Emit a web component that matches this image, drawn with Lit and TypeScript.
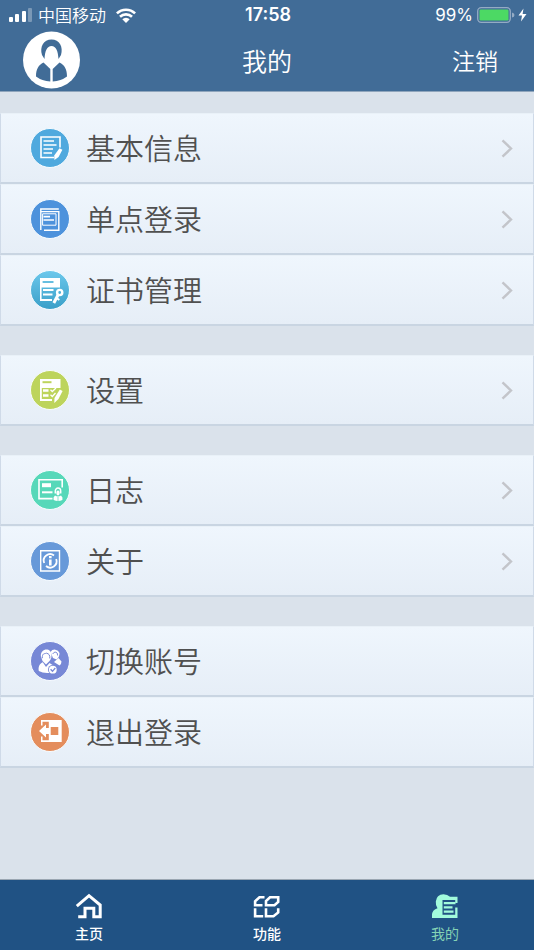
import { LitElement, html, css, svg, nothing } from "lit";
import { customElement, property } from "lit/decorators.js";

interface Item {
  id: string;
  label: string;
  chevron: boolean;
}

const groups: Item[][] = [
  [
    { id: "info", label: "基本信息", chevron: true },
    { id: "sso", label: "单点登录", chevron: true },
    { id: "cert", label: "证书管理", chevron: true },
  ],
  [{ id: "settings", label: "设置", chevron: true }],
  [
    { id: "log", label: "日志", chevron: true },
    { id: "about", label: "关于", chevron: true },
  ],
  [
    { id: "switch", label: "切换账号", chevron: false },
    { id: "logout", label: "退出登录", chevron: false },
  ],
];

const colors: Record<string, string> = {
  info: "#4fa9de",
  sso: "#4d92dc",
  cert: "url(#cert-fill)",
  settings: "#bdd45c",
  log: "#57d8b9",
  about: "#6799d9",
  switch: "#7788d6",
  logout: "#e48d5c",
};

const glyphs: Record<string, unknown> = {
  info: svg`
    <path d="M24 29.5H11V9H30V19.5" fill="none" stroke="#fff" stroke-width="1.6"/>
    <path d="M13.5 13H24M13.5 17H26.5M13.5 21H23M13.5 25H22" stroke="#fff" stroke-width="1.6"/>
    <path d="M29.5 20.2L32.4 21.8L28.6 29L24.4 32L24.2 27.6Z" fill="#fff"/>`,
  sso: svg`
    <path d="M10.8 31V10H28.8" fill="none" stroke="#fff" stroke-width="1.4"/>
    <path d="M10.8 12.6H28.8V31.2H14" fill="none" stroke="#fff" stroke-width="1.4"/>
    <path d="M12.6 14.8H26V26.2H12.6Z" fill="none" stroke="#fff" stroke-width="1"/>
    <path d="M13.5 17.6H20M13.5 21H24" stroke="#fff" stroke-width="1.6"/>`,
  cert: svg`
    <path d="M10 8H30V17.5H11.6V29H22V31H10Z" fill="#fff"/>
    <path d="M12.6 12H23.5" stroke="#55b7dd" stroke-width="1.8"/>
    <path d="M13 20H23.5M13 24.5H22.5" stroke="#fff" stroke-width="2.2"/>
    <circle cx="29.7" cy="22.5" r="2.6" fill="none" stroke="#fff" stroke-width="2.4"/>
    <path d="M28 25L23.8 33" stroke="#fff" stroke-width="3"/>
    <path d="M26 27.5L29.3 30" stroke="#fff" stroke-width="2"/>`,
  settings: svg`
    <path d="M10 9H30.5V18H11.8V29H22V31H10Z" fill="#fff"/>
    <path d="M12.5 12.2H21.5" stroke="#bdd45c" stroke-width="2"/>
    <path d="M13 20.5H18.5M13 25.5H18.5" stroke="#fff" stroke-width="2.6"/>
    <path d="M20.5 19.8L22.3 21.5L26 18M20.5 24.8L22.3 26.5L25.5 23" fill="none" stroke="#fff" stroke-width="1.3"/>
    <path d="M29.8 19.5L32.6 21L28.5 29L24.3 33L24.5 28Z" fill="#fff"/>`,
  log: svg`
    <path d="M22.5 28.6H9V9.8H32.2V17.5" fill="none" stroke="#fff" stroke-width="1.6"/>
    <path d="M12 13.2H21V17.2H12Z" fill="#fff"/>
    <path d="M12 22.3H22.5" stroke="#fff" stroke-width="2"/>
    <path d="M25.3 23.5V21A2.7 2.9 0 0 1 30.7 21V23.5" fill="none" stroke="#fff" stroke-width="1.5"/>
    <ellipse cx="28" cy="23" rx="1.7" ry="2.4" fill="#fff"/>
    <path d="M25 25.6Q28 27.4 31 25.6Q33.2 27.2 32.4 30Q28 32 23.6 30Q22.8 27.2 25 25.6Z" fill="#fff"/>
    <path d="M28 27V31" stroke="#57d8b9" stroke-width=".7"/>`,
  about: svg`
    <path d="M10.7 9.7H29.5V30H10.7Z" fill="none" stroke="#fff" stroke-width="1.4"/>
    <path d="M14.2 22A6.4 6.4 0 0 1 24 14.5M26.2 18A6.4 6.4 0 0 1 16 25" fill="none" stroke="#fff" stroke-width="1.8"/>
    <path d="M20.3 15V17.2M20.3 18.4V24.5" stroke="#fff" stroke-width="2.6"/>`,
  switch: svg`
    <path d="M20.5 11A5 5 0 0 1 29.5 12C29.5 15 28.5 17 26.5 18.5L23 17Z" fill="#fff"/>
    <path d="M24 21L28.5 17L31.5 20.5Q31.5 23 29.5 24.5Z" fill="#fff"/>
    <path d="M10.8 15C10.5 7 21.5 6 21.5 14.5C21.5 17 20.5 19 19.5 20L16 23.5L12.5 20Z" fill="#fff"/>
    <path d="M12.3 17.2C12.3 12 14 13 16.5 12.2C19 12.8 20 14 19.8 17.5" fill="none" stroke="#7788d6" stroke-width="1"/>
    <path d="M22.7 13Q24 10.6 25.8 11.2Q27.8 11.5 27.6 14.5" fill="none" stroke="#7788d6" stroke-width="1"/>
    <path d="M8.8 30C8 25 10 22.5 12.8 21.2L16 26L19.5 22L22.5 24V31.5Q14 33 8.8 30Z" fill="#fff"/>
    <circle cx="22.8" cy="28.7" r="4.8" fill="#7788d6"/>
    <circle cx="22.8" cy="28.7" r="3.9" fill="#fff"/>
    <path d="M20.6 28.3L22.5 30.3L25.3 27" fill="none" stroke="#7788d6" stroke-width="1.3"/>`,
  logout: svg`
    <path d="M11 8H31.7V30H11V24.5H12.5V28.3H18.8V9.8H12.5V13.5H11Z" fill="#fff"/>
    <path d="M20.7 15H28.3V23H20.7Z" fill="#e48d5c"/>
    <path d="M9 19L16 12.5V16H19.8V22H16V25.5Z" fill="#fff"/>`,
};

@customElement("menu-row")
export class MenuRow extends LitElement {
  @property({ attribute: false }) item!: Item;

  static styles = css`
    :host {
      display: block;
    }
    .row {
      box-sizing: border-box;
      display: flex;
      align-items: center;
      gap: 16px;
      width: 100%;
      height: 71px;
      margin: 0;
      padding: 0 20px 0 29px;
      border: 1px solid #cfdae8;
      border-top-color: #e9f1f8;
      border-bottom: 2px solid #c9d5e2;
      background: linear-gradient(#eff6fd, #e6eef7);
      color: #505050;
      font: inherit;
      font-size: 29px;
      line-height: 40px;
      text-align: left;
      cursor: pointer;
    }
    .icon {
      flex: none;
      width: 40px;
      height: 40px;
    }
    .label {
      flex: 1;
      padding-bottom: 2px;
    }
    .chevron {
      flex: none;
      width: 12px;
      height: 20px;
    }
    svg {
      display: block;
    }
  `;

  render() {
    const { id, label, chevron } = this.item;
    return html`<button class="row" type="button">
      <svg class="icon" viewBox="0 0 40 40" aria-hidden="true">
        <defs>
          <linearGradient id="cert-fill" x1="0" y1="0" x2="0" y2="1">
            <stop offset="0" stop-color="#6cc8ec" />
            <stop offset="1" stop-color="#3a9fc8" />
          </linearGradient>
        </defs>
        <circle cx="20" cy="20" r="19.5" fill=${colors[id]} stroke="#f8fcff" stroke-width="1" />
        ${glyphs[id]}
      </svg>
      <span class="label">${label}</span>
      ${chevron
        ? html`<svg class="chevron" viewBox="0 0 12 20" aria-hidden="true">
            <path d="M1.5 2.3L10 10.5L1.5 18.7" fill="none" stroke="#c3c5ca" stroke-width="2.4" />
          </svg>`
        : nothing}
    </button>`;
  }
}

@customElement("app-root")
export class AppRoot extends LitElement {
  static styles = css`
    :host {
      display: flex;
      flex-direction: column;
      min-height: 100vh;
      background: #dae2eb;
      font-family: "Noto Sans CJK SC", sans-serif;
      font-weight: 350;
    }
    .top {
      background: #416c97;
      border-bottom: 1px solid #8fa5bc;
      color: #fff;
    }
    .status {
      display: grid;
      grid-template-columns: 1fr auto 1fr;
      align-items: center;
      height: 30px;
      padding: 0 7px 0 9px;
      font-size: 17px;
      line-height: 24px;
    }
    .carrier,
    .power {
      display: flex;
      align-items: center;
    }
    .carrier {
      gap: 6px;
    }
    .wifi {
      margin-left: 4px;
    }
    .power {
      justify-content: flex-end;
      gap: 4px;
      font-family: Inter, sans-serif;
      font-weight: 400;
    }
    .clock {
      font-family: Inter, sans-serif;
      font-size: 18px;
      font-weight: 600;
    }
    .nav {
      display: grid;
      grid-template-columns: 1fr auto 1fr;
      align-items: center;
      height: 59px;
      padding: 0 36px 2px 22px;
    }
    .avatar {
      justify-self: start;
      width: 58px;
      height: 58px;
      padding: 0;
      border: 0;
      background: none;
      cursor: pointer;
    }
    .title {
      margin: 0 0 0 14px;
      font-size: 25px;
      line-height: 36px;
      font-weight: 350;
    }
    .signout {
      justify-self: end;
      padding: 0;
      border: 0;
      background: none;
      color: #fff;
      font: inherit;
      font-size: 23px;
      line-height: 36px;
      cursor: pointer;
    }
    .content {
      flex: 1;
      display: flex;
      flex-direction: column;
      gap: 29px;
      padding: 21px 0;
    }
    .group {
      margin: 0;
      padding: 0;
      list-style: none;
    }
    .tabs {
      display: grid;
      grid-template-columns: repeat(3, 1fr);
      height: 70px;
      border-top: 1px solid #9aa6b2;
      background: #205284;
    }
    .tab {
      display: flex;
      flex-direction: column;
      align-items: center;
      gap: 4px;
      padding-top: 13px;
      color: #fff;
      font-size: 14px;
      line-height: 20px;
      font-weight: 500;
      text-decoration: none;
    }
    .tab.current {
      color: #84d3b5;
      font-weight: 400;
    }
    svg {
      display: block;
    }
  `;

  render() {
    return html`
      <header class="top">
        <div class="status">
          <div class="carrier">
            <svg width="23" height="14" viewBox="0 0 23 14" aria-hidden="true">
              <rect x="0" y="9" width="4" height="5" rx="1" fill="#fff" />
              <rect x="6" y="6" width="4" height="8" rx="1" fill="#fff" />
              <rect x="13" y="3" width="4" height="11" rx="1" fill="#fff" />
              <rect x="19" y="0" width="4" height="14" rx="1" fill="#fff" opacity=".3" />
            </svg>
            <span>中国移动</span>
            <svg class="wifi" width="20" height="15" viewBox="0 0 20 15" aria-hidden="true">
              <path
                d="M.9 5.4A13 13 0 0 1 19.1 5.4M4 8.8A8.6 8.6 0 0 1 16 8.8"
                fill="none"
                stroke="#fff"
                stroke-width="2.6"
              />
              <path d="M6.3 11.2A5.3 5.3 0 0 1 13.7 11.2L10 15Z" fill="#fff" />
            </svg>
          </div>
          <span class="clock">17:58</span>
          <div class="power">
            <span>99%</span>
            <svg width="50" height="16" viewBox="0 0 50 16" aria-hidden="true">
              <rect x=".7" y=".7" width="32.6" height="14.6" rx="3.5" fill="none" stroke="#94abc4" stroke-width="1.3" />
              <rect x="2.5" y="2.5" width="29" height="11" rx="1.2" fill="#4cd964" />
              <path d="M35 5.5Q37.5 6 37.5 8T35 10.5Z" fill="#94abc4" />
              <path d="M46.5 1.5L41.5 8.6H45L44 14.5L49.5 7H45.6Z" fill="#fff" />
            </svg>
          </div>
        </div>
        <nav class="nav">
          <button class="avatar" type="button" aria-label="头像">
            <svg width="58" height="58" viewBox="0 0 58 58" aria-hidden="true">
              <circle cx="29.5" cy="29" r="28.5" fill="#fff" />
              <path
                d="M20 24C17.5 16 21.5 8.5 29.5 8.5S41.5 16 39 24L36.5 28C36 20 34 15 29.5 15S23 20 22.5 28Z"
                fill="#416c97"
              />
              <path
                d="M21.5 31.5L28.3 38V50.5Q20 50 14 45.5C14 38 16.5 34 21.5 31.5ZM37.5 31.5L30.7 38V50.5Q39 50 45 45.5C45 38 42.5 34 37.5 31.5Z"
                fill="#416c97"
              />
            </svg>
          </button>
          <h1 class="title">我的</h1>
          <button class="signout" type="button">注销</button>
        </nav>
      </header>
      <main class="content">
        ${groups.map(
          (group) => html`<ul class="group">
            ${group.map((item) => html`<li><menu-row .item=${item}></menu-row></li>`)}
          </ul>`
        )}
      </main>
      <nav class="tabs">
        <a class="tab" href="#home">
          <svg width="28" height="26" viewBox="0 0 28 26" aria-hidden="true">
            <path
              d="M1.8 13.2L14 2.6L25.2 12V23.8H18.8V15.2H10V23.8H3.2"
              fill="none"
              stroke="#fff"
              stroke-width="3"
            />
          </svg>
          主页
        </a>
        <a class="tab" href="#features">
          <svg width="28" height="26" viewBox="0 0 28 26" aria-hidden="true">
            <g fill="none" stroke="#fff" stroke-width="2.6">
              <path d="M11.5 4.3H6.5L2.1 8.3V12.3H9.5" />
              <path d="M17 4.3H25.2V9L21.5 12.3H13V8Z" />
              <path d="M2.1 15.2V23.3H10.2" />
              <path d="M13 15.2V23.3H20.5L25.2 19.5V15.2" />
            </g>
          </svg>
          功能
        </a>
        <a class="tab current" href="#mine" aria-current="page">
          <svg width="28" height="26" viewBox="0 0 28 26" aria-hidden="true">
            <path
              d="M1 25V21Q1.5 17 6.5 15.2Q4.5 12.5 4.8 8.5Q5.5 1.5 12.5 1.2Q16.5 1.2 19 3.8H26.5V10H24.2V7H11.5V21.8H24.2V14.5H26.5V25Z"
              fill="#a2fbdc"
            />
            <path d="M12.8 10.2H24.5M12.8 14.4H21.5M12.8 18.6H22.5" stroke="#a2fbdc" stroke-width="2.2" />
          </svg>
          我的
        </a>
      </nav>
    `;
  }
}
